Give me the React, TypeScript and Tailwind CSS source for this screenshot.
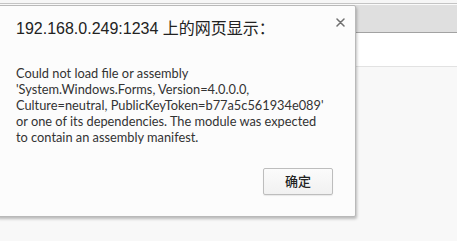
import React from 'react'

const bodyLines = [
  'Could not load file or assembly',
  "'System.Windows.Forms, Version=4.0.0.0,",
  "Culture=neutral, PublicKeyToken=b77a5c561934e089'",
  'or one of its dependencies. The module was expected',
  'to contain an assembly manifest.',
]

function CloseIcon() {
  return (
    <svg width="9" height="9" viewBox="0 0 9 9" className="block">
      <path d="M1 1 L8 8 M8 1 L1 8" stroke="#707070" strokeWidth="1.5" strokeLinecap="round" />
    </svg>
  )
}

export default function App() {
  return (
    <div
      className="relative h-[241px] w-[457px] overflow-hidden bg-[#f8f8f8]"
      style={{ fontFamily: '"Noto Sans", "Noto Sans CJK SC", sans-serif' }}
    >
      {/* 背景页：顶部标签栏 + 地址栏 */}
      <div className="h-[3px] bg-[#f6f6f6]" />
      <div className="h-px bg-[#c4c4c4]" />
      <div className="h-px bg-[#fafafa]" />
      <div className="h-[28px] border-b border-[#a2a2a2] bg-[#dfdfdf]" />
      <div className="h-[34px] border-b border-[#e2e2e2] bg-white" />

      {/* 对话框 */}
      <div className="absolute left-[-4px] top-[5px] h-[212px] w-[360px] rounded-[2px] border border-[#b9b9b9] bg-[#fcfcfc] pl-[19px] pr-[22px] pt-[13px] shadow-[1px_2px_3px_rgba(0,0,0,0.25)]">
        <div className="absolute right-[10px] top-[12px]">
          <CloseIcon />
        </div>
        <div
          className="h-[20px] text-[16px] leading-[20px] text-[#222]"
          style={{ fontFamily: '"Liberation Sans", "Noto Sans CJK SC", sans-serif' }}
        >
          192.168.0.249:1234 上的网页显示：
        </div>
        <div
          className="mt-[26px] text-[12.8px] leading-[16px] text-[#333]"
          style={{ fontFamily: 'Lato, "Noto Sans", sans-serif' }}
        >
          {bodyLines.map((line) => (
            <div key={line} className="h-[16px] whitespace-nowrap">
              {line}
            </div>
          ))}
        </div>
        <div className="mt-[23px] flex justify-end">
          <button className="h-[27px] w-[70px] rounded-[2px] border border-[#bdbdbd] bg-gradient-to-b from-[#fbfbfb] to-[#f1f1f1] text-[13px] font-medium text-[#222] shadow-[0_1px_1px_rgba(0,0,0,0.08)]">
            确定
          </button>
        </div>
      </div>
    </div>
  )
}
